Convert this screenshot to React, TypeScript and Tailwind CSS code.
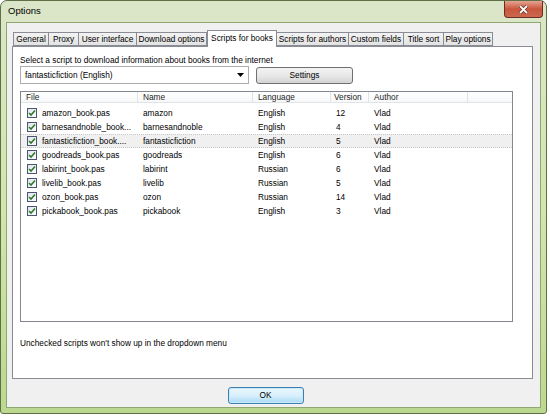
import React from 'react';

interface Script {
  file: string;
  name: string;
  language: string;
  version: number;
  author: string;
}

const scripts: Script[] = [
  { file: 'amazon_book.pas', name: 'amazon', language: 'English', version: 12, author: 'Vlad' },
  { file: 'barnesandnoble_book...', name: 'barnesandnoble', language: 'English', version: 4, author: 'Vlad' },
  { file: 'fantasticfiction_book....', name: 'fantasticfiction', language: 'English', version: 5, author: 'Vlad' },
  { file: 'goodreads_book.pas', name: 'goodreads', language: 'English', version: 6, author: 'Vlad' },
  { file: 'labirint_book.pas', name: 'labirint', language: 'Russian', version: 6, author: 'Vlad' },
  { file: 'livelib_book.pas', name: 'livelib', language: 'Russian', version: 5, author: 'Vlad' },
  { file: 'ozon_book.pas', name: 'ozon', language: 'Russian', version: 14, author: 'Vlad' },
  { file: 'pickabook_book.pas', name: 'pickabook', language: 'English', version: 3, author: 'Vlad' },
];

const tabs = [
  { label: 'General', w: 'w-[36px]' },
  { label: 'Proxy', w: 'w-[30px]' },
  { label: 'User interface', w: 'w-[58px]' },
  { label: 'Download options', w: 'w-[70px]' },
  { label: 'Scripts for books', w: 'w-[70px]', active: true },
  { label: 'Scripts for authors', w: 'w-[72px]' },
  { label: 'Custom fields', w: 'w-[55px]' },
  { label: 'Title sort', w: 'w-[40px]' },
  { label: 'Play options', w: 'w-[49px]' },
];

function CheckBox() {
  return (
    <div className="w-[10px] h-[10px] border border-[#4a5670] bg-gradient-to-br from-[#dfe3ea] to-white flex items-center justify-center">
      <svg width="8" height="8" viewBox="0 0 8 8">
        <path d="M1 4 L3 6 L7 1.5" fill="none" stroke="#2d7a2a" strokeWidth="1.6" />
      </svg>
    </div>
  );
}

export default function App() {
  return (
    <div className="w-[550px] h-[416px] bg-white text-black" style={{ fontFamily: '"Liberation Sans", Arial, sans-serif' }}>
      <div className="w-[547px] h-[414px] flex flex-col rounded-t-[7px] rounded-b-[3px] border border-[#5d7046] bg-gradient-to-b from-[#dbe6c9] via-[#d2e6ad] to-[#bcd890]">
        {/* title bar */}
        <div className="h-[21px] flex items-start justify-between">
          <div className="pl-[7px] pt-[4px] text-[9.5px] leading-[12px]">Options</div>
          <div className="mr-[3px] w-[39px] h-[17px] rounded-b-[4px] border border-t-0 border-[#6e2b1e] bg-gradient-to-b from-[#e4a493] via-[#c9553c] to-[#c96a50] flex items-center justify-center">
            <svg width="11" height="9" viewBox="0 0 11 9">
              <path d="M2 1 L9 8 M9 1 L2 8" stroke="#4a1a10" strokeWidth="3" />
              <path d="M2 1 L9 8 M9 1 L2 8" stroke="#ffffff" strokeWidth="1.8" />
            </svg>
          </div>
        </div>
        {/* client area */}
        <div className="flex-1 mx-[5px] mb-[5px] border border-[#8fa870] bg-[#f0f0f0] flex flex-col text-[8.3px] leading-[11px]">
          <div className="flex flex-col pl-[5px] pr-[7px] pt-[6px]">
            {/* tabs */}
            <div className="flex items-end pl-[1px] h-[17px]">
              {tabs.map(t =>
                t.active ? (
                  <div
                    key={t.label}
                    className={`${t.w} h-[17px] -mb-[1px] relative z-10 border border-b-0 border-[#898c95] bg-white flex items-start justify-center pt-[2px] whitespace-nowrap`}
                  >
                    {t.label}
                  </div>
                ) : (
                  <div
                    key={t.label}
                    className={`${t.w} h-[14px] border border-l-0 first:border-l border-[#898c95] bg-gradient-to-b from-[#f3f3f3] to-[#e3e3e3] flex items-center justify-center whitespace-nowrap`}
                  >
                    {t.label}
                  </div>
                )
              )}
            </div>
            {/* tab panel */}
            <div className="h-[333px] border border-[#898c95] bg-white flex flex-col pl-[7px] pr-[19px]">
              <div className="mt-[8px] h-[11px]">Select a script to download information about books from the internet</div>
              <div className="flex items-center gap-[7px]">
                <div className="w-[229px] h-[18px] border border-[#abadb3] bg-white flex items-center justify-between pl-[4px] pr-[4px]">
                  <span>fantasticfiction (English)</span>
                  <svg width="7" height="4" viewBox="0 0 7 4">
                    <path d="M0 0 H7 L3.5 4 Z" fill="#000" />
                  </svg>
                </div>
                <button className="w-[97px] h-[17px] rounded-[3px] border border-[#707070] bg-gradient-to-b from-[#f3f3f3] via-[#e8e8e8] to-[#d4d4d4] flex items-center justify-center">
                  Settings
                </button>
              </div>
              {/* list view */}
              <div className="mt-[7px] h-[231px] border border-[#828790] bg-white flex flex-col">
                <div className="h-[11px] flex items-center border-b border-[#e1e3e6] bg-gradient-to-b from-white to-[#f7f8f9] text-[#1e1e1e]">
                  <div className="w-[117px] pl-[5px] border-r border-[#e1e3e6] h-full flex items-center">File</div>
                  <div className="w-[115px] pl-[5px] border-r border-[#e1e3e6] h-full flex items-center">Name</div>
                  <div className="w-[78px] pl-[5px] border-r border-[#e1e3e6] h-full flex items-center">Language</div>
                  <div className="w-[38px] pl-[3px] border-r border-[#e1e3e6] h-full flex items-center">Version</div>
                  <div className="w-[99px] pl-[5px] border-r border-[#e1e3e6] h-full flex items-center">Author</div>
                </div>
                <div className="mt-[3px] flex flex-col">
                  {scripts.map((s, i) => (
                    <div
                      key={s.file}
                      className={`h-[14px] flex items-center border-y ${
                        i === 2 ? 'bg-[#f0f0f0] border-dotted border-[#c9c9c9]' : 'border-transparent'
                      }`}
                    >
                      <div className="w-[117px] pl-[6px] flex items-center gap-[5px] whitespace-nowrap">
                        <CheckBox />
                        <span>{s.file}</span>
                      </div>
                      <div className="w-[115px] pl-[5px]">{s.name}</div>
                      <div className="w-[78px] pl-[5px]">{s.language}</div>
                      <div className="w-[38px] pl-[5px]">{s.version}</div>
                      <div className="w-[99px] pl-[5px]">{s.author}</div>
                    </div>
                  ))}
                </div>
              </div>
              <div className="mt-[16px]">Unchecked scripts won't show up in the dropdown menu</div>
            </div>
          </div>
          {/* buttons */}
          <div className="flex justify-center mt-[8px] pr-[16px]">
            <button className="w-[76px] h-[17px] rounded-[3px] border border-[#3c7fb1] bg-gradient-to-b from-[#eaf6fd] via-[#d9f0fc] to-[#a7d9f5] flex items-center justify-center shadow-[inset_0_0_0_1px_#c9e8f9]">
              OK
            </button>
          </div>
        </div>
      </div>
    </div>
  );
}
